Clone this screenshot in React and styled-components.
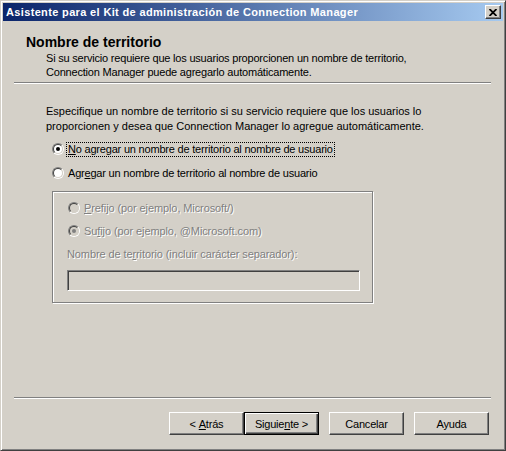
import React from 'react';
import styled, { createGlobalStyle } from 'styled-components';

const FACE = '#D4D0C8';

const Global = createGlobalStyle`
  html, body { margin: 0; padding: 0; background: ${FACE}; }
  body { width: 506px; height: 451px; overflow: hidden; }
  #root { width: 506px; height: 451px; }
`;

const Window = styled.div`
  box-sizing: border-box;
  width: 506px;
  height: 451px;
  display: flex;
  flex-direction: column;
  background: ${FACE};
  border: 1px solid;
  border-color: ${FACE} #404040 #404040 ${FACE};
  box-shadow: inset 1px 1px #fff, inset -1px -1px #808080;
  padding: 2px;
  font-family: "Liberation Sans", Arial, sans-serif;
  font-size: 11px;
  color: #000;
`;

const TitleBar = styled.div`
  height: 18px;
  flex: none;
  display: flex;
  align-items: center;
  padding: 0 2px 0 3px;
  background: linear-gradient(to right, #0a246a, #a6caf0);
`;

const TitleText = styled.div`
  flex: 1;
  color: #fff;
  font-weight: bold;
  font-size: 11px;
  white-space: nowrap;
  letter-spacing: 0.35px;
`;

const CloseButton = styled.div`
  box-sizing: border-box;
  width: 16px;
  height: 14px;
  background: ${FACE};
  border: 1px solid;
  border-color: #fff #404040 #404040 #fff;
  box-shadow: inset -1px -1px #808080;
  display: flex;
  align-items: center;
  justify-content: center;
`;

const Header = styled.div`
  flex: none;
  padding: 13px 0 0 23px;
`;

const HeaderTitle = styled.div`
  font-weight: bold;
  font-size: 14px;
  line-height: 16px;
`;

const HeaderSub = styled.div`
  margin: 1px 0 0 20px;
  line-height: 14px;
  letter-spacing: -0.2px;
`;

const Separator = styled.div`
  flex: none;
  height: 0;
  border-top: 1px solid #808080;
  border-bottom: 1px solid #fff;
  margin: ${p => p.$top || 0}px 12px 0 11px;
`;

const Body = styled.div`
  flex: 1;
  display: flex;
  flex-direction: column;
  align-items: flex-start;
  padding: 20px 0 0 43px;
`;

const Para = styled.p`
  margin: 0;
  line-height: 15px;
  letter-spacing: 0;
`;

const RadioList = styled.div`
  display: flex;
  flex-direction: column;
  gap: ${p => p.$gap}px;
  margin: ${p => p.$top}px 0 0 ${p => p.$left}px;
`;

const RadioRow = styled.div`
  display: flex;
  align-items: center;
  height: 16px;
`;

const RadioOuter = styled.span`
  box-sizing: border-box;
  width: 12px;
  height: 12px;
  border-radius: 50%;
  border: 1px solid;
  border-color: #808080 #fff #fff #808080;
  display: inline-flex;
  flex: none;
`;

const RadioInner = styled.span`
  box-sizing: border-box;
  width: 100%;
  height: 100%;
  border-radius: 50%;
  border: 1px solid;
  border-color: #404040 ${FACE} ${FACE} #404040;
  background: ${p => (p.$disabled ? FACE : '#fff')};
  display: flex;
  align-items: center;
  justify-content: center;
`;

const Dot = styled.span`
  width: 4px;
  height: 4px;
  border-radius: 50%;
  background: ${p => (p.$disabled ? '#808080' : '#000')};
`;

const Label = styled.span`
  margin-left: 2px;
  padding: 0 1px;
  line-height: 13px;
  border: 1px dotted ${p => (p.$focus ? '#000' : 'transparent')};
  white-space: nowrap;
  letter-spacing: ${p => (p.$disabled ? '-0.1px' : '-0.2px')};
  color: ${p => (p.$disabled ? '#808080' : '#000')};
  text-shadow: ${p => (p.$disabled ? '1px 1px #fff' : 'none')};
`;

const GroupBox = styled.div`
  box-sizing: border-box;
  width: 321px;
  margin: 10px 0 0 6px;
  border: 1px solid #808080;
  box-shadow: inset 1px 1px #fff, 1px 1px #fff;
  padding: 8px 13px 11px 14px;
  display: flex;
  flex-direction: column;
  align-items: flex-start;
`;

const FieldLabel = styled.div`
  margin-top: 8px;
  line-height: 14px;
  letter-spacing: -0.1px;
  color: #808080;
  text-shadow: 1px 1px #fff;
`;

const TextBox = styled.div`
  box-sizing: border-box;
  margin-top: 9px;
  width: 293px;
  height: 21px;
  background: ${FACE};
  border: 1px solid;
  border-color: #808080 #fff #fff #808080;
  box-shadow: inset 1px 1px #404040, inset -1px -1px ${FACE};
`;

const Footer = styled.div`
  flex: none;
  display: flex;
  justify-content: flex-end;
  padding: 13px 14px 13px 0;
`;

const Button = styled.div`
  box-sizing: border-box;
  width: 75px;
  height: 23px;
  margin-left: ${p => p.$gap || 0}px;
  display: flex;
  align-items: center;
  justify-content: center;
  background: ${FACE};
  white-space: pre;
  letter-spacing: -0.2px;
  ${p =>
    p.$default
      ? `border: 1px solid #000;
         box-shadow: inset 1px 1px #fff, inset -1px -1px #404040, inset -2px -2px #808080;`
      : `border: 1px solid; border-color: #fff #404040 #404040 #fff;
         box-shadow: inset -1px -1px #808080;`}
`;

const Radio = ({ checked, disabled }) => (
  <RadioOuter>
    <RadioInner $disabled={disabled}>{checked && <Dot $disabled={disabled} />}</RadioInner>
  </RadioOuter>
);

export default function App() {
  return (
    <>
      <Global />
      <Window>
        <TitleBar>
          <TitleText>Asistente para el Kit de administración de Connection Manager</TitleText>
          <CloseButton>
            <svg width="8" height="7" viewBox="0 0 8 7">
              <path d="M0.5 0 L7.5 7 M7.5 0 L0.5 7" stroke="#000" strokeWidth="1.8" fill="none" />
            </svg>
          </CloseButton>
        </TitleBar>
        <Header>
          <HeaderTitle>Nombre de territorio</HeaderTitle>
          <HeaderSub>
            Si su servicio requiere que los usuarios proporcionen un nombre de territorio,
            <br />
            Connection Manager puede agregarlo automáticamente.
          </HeaderSub>
        </Header>
        <Separator $top={3} />
        <Body>
          <Para>
            Especifique un nombre de territorio si su servicio requiere que los usuarios lo
            <br />
            proporcionen y desea que Connection Manager lo agregue automáticamente.
          </Para>
          <RadioList $gap={8} $top={7} $left={6}>
            <RadioRow>
              <Radio checked />
              <Label $focus>
                <u>N</u>o agregar un nombre de territorio al nombre de usuario
              </Label>
            </RadioRow>
            <RadioRow>
              <Radio />
              <Label>
                Agr<u>e</u>gar un nombre de territorio al nombre de usuario
              </Label>
            </RadioRow>
          </RadioList>
          <GroupBox>
            <RadioList $gap={7} $top={0} $left={1}>
              <RadioRow>
                <Radio disabled />
                <Label $disabled>
                  <u>P</u>refijo (por ejemplo, Microsoft/)
                </Label>
              </RadioRow>
              <RadioRow>
                <Radio disabled checked />
                <Label $disabled>
                  Su<u>f</u>ijo (por ejemplo, @Microsoft.com)
                </Label>
              </RadioRow>
            </RadioList>
            <FieldLabel>
              Nombre de te<u>r</u>ritorio (incluir carácter separador):
            </FieldLabel>
            <TextBox />
          </GroupBox>
        </Body>
        <Separator />
        <Footer>
          <Button>
            {'< '}
            <u>A</u>
            {'trás'}
          </Button>
          <Button $default>
            {'Siguie'}
            <u>n</u>
            {'te >'}
          </Button>
          <Button $gap={10}>Cancelar</Button>
          <Button $gap={10}>Ayuda</Button>
        </Footer>
      </Window>
    </>
  );
}
